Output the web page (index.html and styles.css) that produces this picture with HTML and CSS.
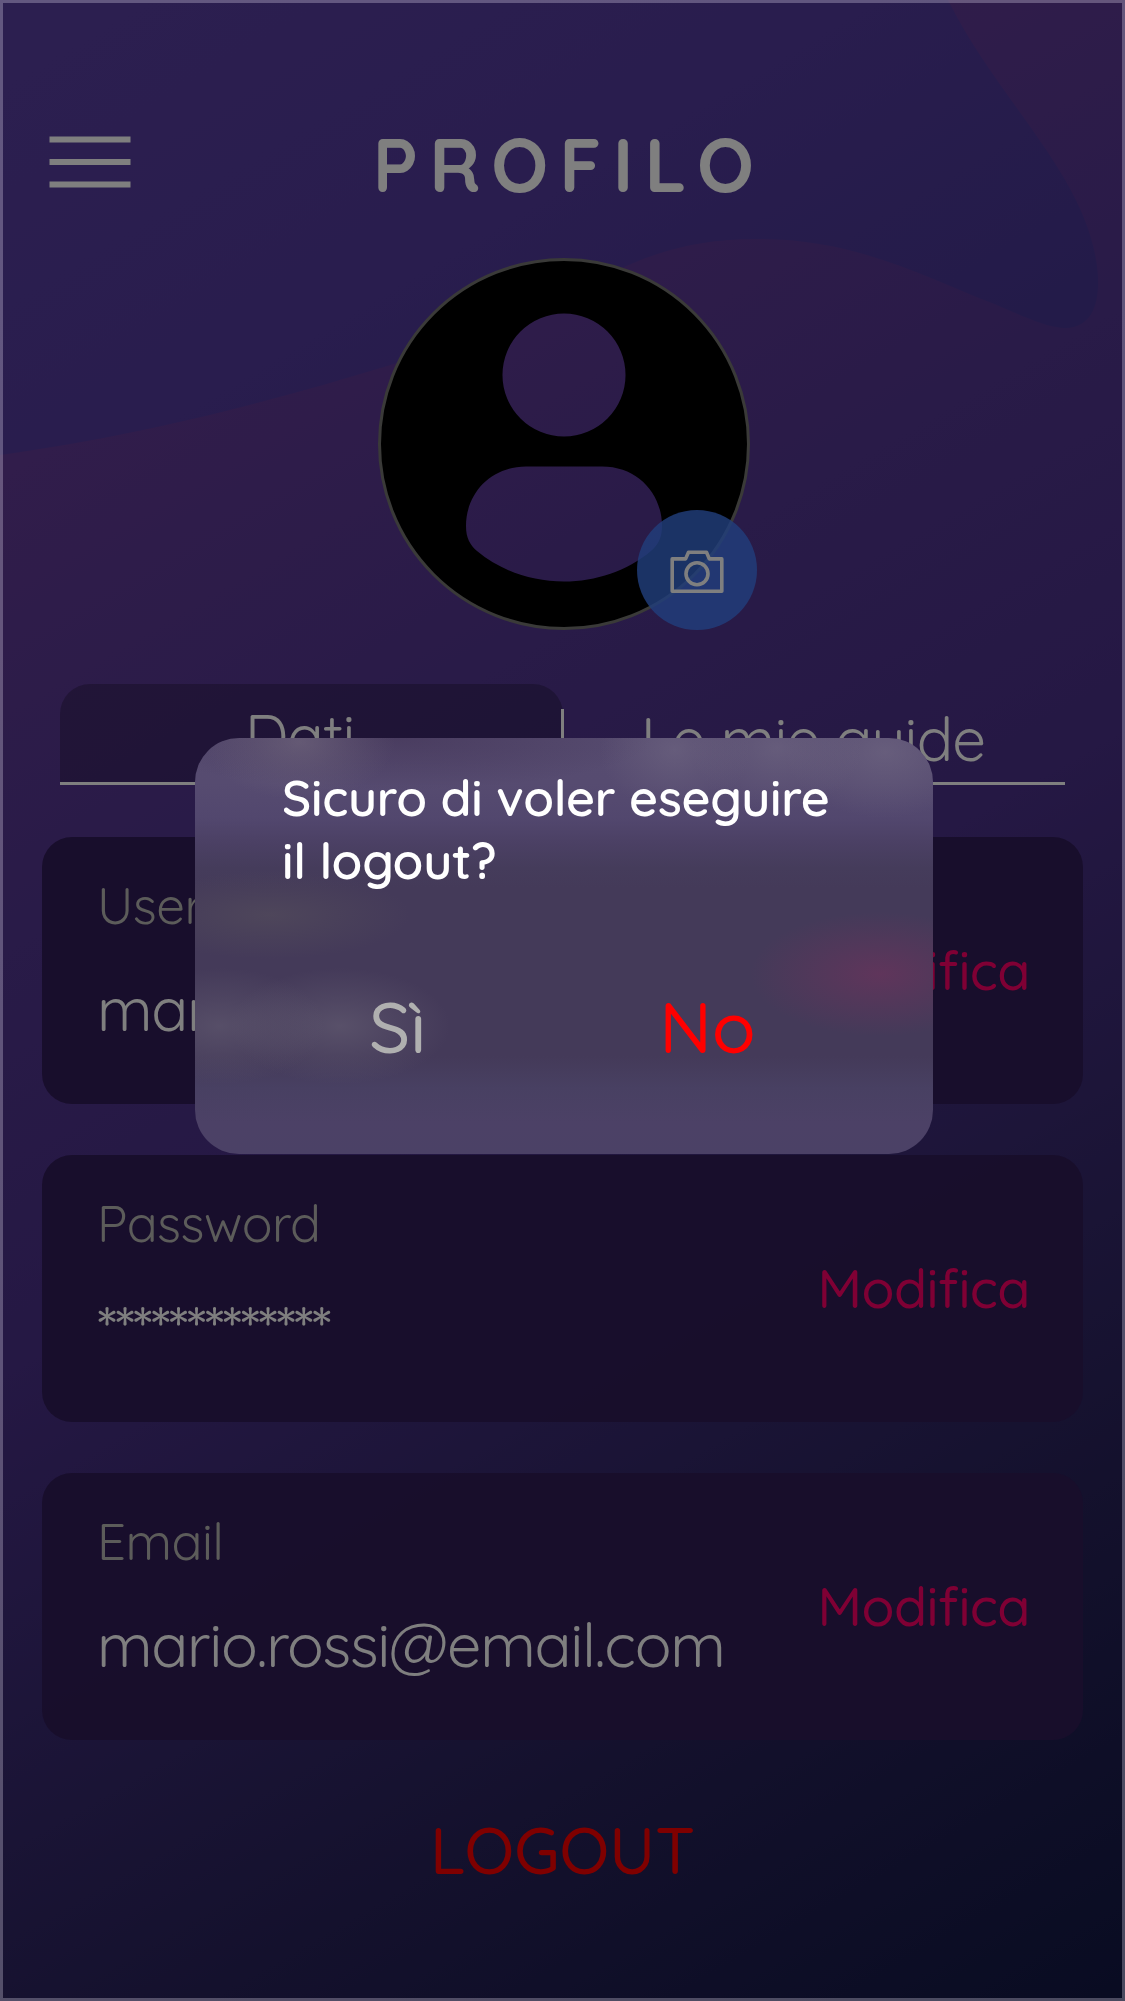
FILE: index.html
```html
<!DOCTYPE html>
<html lang="it">
<head>
<meta charset="utf-8">
<title>Profilo</title>
<link rel="stylesheet" href="styles.css">
</head>
<body>
<div class="screen">
  <svg class="wave" viewBox="0 0 1125 500" width="1125" height="500" aria-hidden="true">
    <defs>
      <linearGradient id="waveFill" gradientUnits="userSpaceOnUse" x1="150" y1="0" x2="530" y2="640">
        <stop offset="0" stop-color="#583ea0"/>
        <stop offset=".5" stop-color="#523a9c"/>
        <stop offset="1" stop-color="#463692"/>
      </linearGradient>
    </defs>
    <path fill="url(#waveFill)" d="M0 455C150 434 275 400 387 366C500 332 580 286 631 264C680 243 720 239 760 239C860 239 930 280 997 305C1025 317 1045 327 1065 328C1091 328 1099 305 1098 278C1093 180 1000 105 948 0H0Z"/>
  </svg>

  <header class="header">
    <svg class="menu" viewBox="0 0 82 52" width="82" height="52" aria-label="Menu">
      <path fill="#fff" d="M.5 .5H81.500V6.500H.5ZM.5 23H81.500V29H.5ZM.5 45.500H81.500V51.500H.5Z"/>
    </svg>
    <h1 class="title">PROFILO</h1>
  </header>

  <div class="avatar">
    <svg viewBox="0 0 372 372" width="372" height="372" aria-label="Avatar">
      <path fill="#000" fill-rule="evenodd" d="M186 1A185 185 0 1 1 186 371A185 185 0 1 1 186 1ZM186 55.500A61.500 61.500 0 1 0 186 178.500A61.500 61.500 0 1 0 186 55.500ZM148 208.500C112 208.500 88 236 88 268C88 280 92 287 99 293C123 313 154 323.500 186 323.500C218 323.500 249 313 273 293C280 287 284 280 284 268C284 236 260 208.500 224 208.500Z"/>
      <circle cx="186" cy="186" r="184.500" fill="none" stroke="#747470" stroke-width="3"/>
    </svg>
    <span class="camera">
      <svg viewBox="0 0 54 44" width="54" height="44" fill="none" stroke="#fff" stroke-width="3.600" stroke-linejoin="round" aria-label="Foto">
        <path d="M2.200 8.900H15.600L18.500 2.200H36.500L39.300 8.900H51.800V41.300H2.200Z"/>
        <circle cx="27" cy="23.700" r="11"/>
      </svg>
    </span>
  </div>

  <nav class="tabs">
    <a class="tab tab-active">Dati</a>
    <a class="tab">Le mie guide</a>
  </nav>

  <main class="cards">
    <section class="card">
      <div class="field">
        <span class="label">Username</span>
        <span class="value">mario.rossi</span>
      </div>
      <a class="edit">Modifica</a>
    </section>
    <section class="card">
      <div class="field">
        <span class="label">Password</span>
        <span class="value value-secret">*************</span>
      </div>
      <a class="edit">Modifica</a>
    </section>
    <section class="card">
      <div class="field">
        <span class="label">Email</span>
        <span class="value">mario.rossi@email.com</span>
      </div>
      <a class="edit">Modifica</a>
    </section>
  </main>

  <a class="logout">LOGOUT</a>

  <div class="overlay"></div>
  <div class="dialog" role="dialog">
    <p class="question">Sicuro di voler eseguire<br>il logout?</p>
    <div class="actions">
      <a class="yes">Sì</a>
      <a class="no">No</a>
    </div>
  </div>
</div>
</body>
</html>
```
FILE: styles.css
```css
* { box-sizing: border-box; }

body {
  margin: 0;
  font-family: Quicksand, Lato, "Open Sans", sans-serif;
  font-weight: 400;
  color: #fff;
}

.screen {
  position: relative;
  width: 1125px;
  height: 2001px;
  overflow: hidden;
  background: linear-gradient(150deg, #643c98 0%, #623a96 18%, #523690 36%, #4a3088 52%, #34286a 70%, #28225a 80%, #121844 100%);
}

.wave {
  position: absolute;
  top: 0;
  left: 0;
}

.header {
  position: relative;
  display: grid;
  grid-template-columns: 1fr auto 1fr;
  padding: 119px 49px 0;
}

.menu { margin-top: 17px; }

.title {
  margin: 0;
  padding-left: 13px;
  font-size: 75px;
  line-height: 90px;
  font-weight: 700;
  letter-spacing: 11.2px;
}

.avatar {
  position: relative;
  width: 372px;
  height: 372px;
  margin: 49px auto 0 378px;
}

.avatar > svg { display: block; }

.camera {
  position: absolute;
  left: 259px;
  top: 252px;
  width: 120px;
  height: 120px;
  display: flex;
  align-items: center;
  justify-content: center;
  padding-top: 3px;
  border-radius: 50%;
  background: rgba(66, 124, 248, .82);
}

.tabs {
  position: relative;
  display: grid;
  grid-template-columns: 1fr 1fr;
  height: 101px;
  margin: 54px 60px 0;
  border-bottom: 3px solid #fff;
  font-size: 60px;
  line-height: 72px;
  letter-spacing: -.8px;
}

.tab {
  display: flex;
  justify-content: center;
  padding-top: 19px;
}

.tab-active {
  padding: 16px 23px 0 0;
  border-radius: 30px 30px 0 0;
  background: rgba(0, 0, 0, .24);
}

.tab + .tab {
  margin-left: -1.5px;
  background: linear-gradient(#fff, #fff) 0 25px / 3px 76px no-repeat;
}

.cards {
  position: relative;
  display: flex;
  flex-direction: column;
  gap: 51px;
  padding: 52px 42px 0;
}

.card {
  display: flex;
  justify-content: space-between;
  align-items: center;
  height: 267px;
  padding: 0 53px 2px 55px;
  border-radius: 30px;
  background: rgba(49, 28, 87, .97);
}

.field {
  align-self: flex-start;
  display: flex;
  flex-direction: column;
  gap: 37px;
  padding-top: 38px;
}

.label {
  font-size: 51px;
  line-height: 60px;
  letter-spacing: -.5px;
  color: #b8b8b4;
}

.value {
  font-size: 61px;
  line-height: 72px;
  letter-spacing: -1.3px;
}

.value-secret {
  font-weight: 500;
  letter-spacing: -2.05px;
}

.edit {
  font-size: 54px;
  line-height: 60px;
  font-weight: 500;
  letter-spacing: -.5px;
  color: #ff0068;
}

.logout {
  position: relative;
  display: block;
  margin-top: 70px;
  font-size: 65px;
  line-height: 80px;
  font-weight: 500;
  text-align: center;
  color: #f00;
}

.overlay {
  position: absolute;
  inset: 0;
  background: rgba(0, 0, 0, .5);
}

.overlay::after {
  content: "";
  position: absolute;
  inset: 0;
  border: 3px solid rgba(246, 238, 255, .28);
}

/* Frosted panel: soft glows stand where the tabs, fields and link lie beneath. */
.dialog {
  position: absolute;
  left: 195px;
  top: 738px;
  width: 738px;
  height: 416px;
  padding: 28px 0 0 87px;
  border-radius: 44px;
  background:
    radial-gradient(ellipse 95px 58px at 105px 4px, rgba(118, 108, 128, .55), rgba(118, 108, 128, .25) 50%, transparent),
    radial-gradient(ellipse 75px 62px at 480px 12px, rgba(122, 114, 138, .42), rgba(122, 114, 138, .2) 50%, transparent),
    radial-gradient(ellipse 85px 62px at 582px 10px, rgba(122, 114, 138, .42), rgba(122, 114, 138, .2) 50%, transparent),
    radial-gradient(ellipse 100px 66px at 690px 14px, rgba(122, 114, 138, .45), rgba(122, 114, 138, .22) 50%, transparent),
    radial-gradient(ellipse 140px 44px at 75px 177px, rgba(88, 82, 92, .5), rgba(88, 82, 92, .24) 50%, transparent),
    radial-gradient(ellipse 105px 58px at 25px 288px, rgba(112, 106, 124, .42), rgba(112, 106, 124, .2) 50%, transparent),
    radial-gradient(ellipse 110px 58px at 145px 288px, rgba(112, 106, 124, .46), rgba(112, 106, 124, .22) 50%, transparent),
    radial-gradient(ellipse 130px 62px at 685px 236px, rgba(112, 50, 92, .62), rgba(112, 50, 92, .3) 50%, transparent),
    radial-gradient(ellipse 260px 52px at 200px 0, rgba(52, 36, 70, .38), rgba(52, 36, 70, .2) 50%, transparent),
    linear-gradient(#574c70 0, #564b70 45px, #52476e 80px, #4b4064 105px, #453c5b 130px, #443a59 150px, #443a59 318px, #484062 350px, #4c4166 385px, #4b4166 100%);
}

.question {
  margin: 0;
  font-size: 50px;
  line-height: 63px;
  font-weight: 600;
  letter-spacing: -.25px;
}

.actions {
  display: flex;
  gap: 233px;
  padding: 92px 0 0 87px;
  font-size: 72px;
  line-height: 84px;
  font-weight: 500;
}

.yes { color: #b0b0b0; }
.no { color: #f00; }
```
